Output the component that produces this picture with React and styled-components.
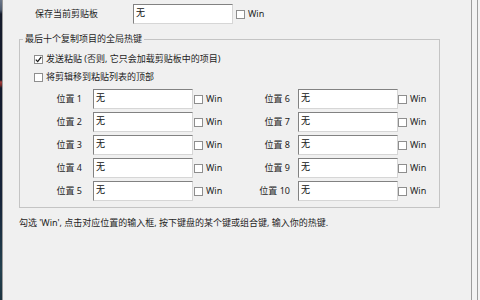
import React from "react";
import styled, { createGlobalStyle } from "styled-components";

const GlobalStyle = createGlobalStyle`
  html, body { margin: 0; padding: 0; background: #f0f0f0; }
  body {
    font-family: "Noto Sans", "Noto Sans CJK SC", sans-serif;
    font-size: 9px;
    color: #1e1e1e;
  }
`;

const Frame = styled.div`
  display: flex;
  width: 480px;
  height: 300px;
  overflow: hidden;
  background: #f0f0f0;
`;

const DesktopStrip = styled.div`
  width: 2px;
  flex: none;
  background: linear-gradient(
    to bottom,
    #6b7688 0,
    #4d5a6e 10px,
    #151b2c 14px,
    #131a2b 80px,
    #a23b3b 82px,
    #7a2a2a 85px,
    #121a2d 88px,
    #16243a 200px,
    #23414f 270px,
    #1c3340 300px
  );
`;

const Rule = styled.div`
  width: 1px;
  flex: none;
  background: ${(p) => p.$color || "#9d9d9d"};
`;

const Gutter = styled.div`
  width: ${(p) => p.$width}px;
  flex: none;
  background: #f3f3f3;
`;

const Panel = styled.div`
  flex: 1;
  min-width: 0;
  display: flex;
  flex-direction: column;
  padding-top: 4px;
  background: #f0f0f0;
`;

const TopRow = styled.div`
  display: flex;
  align-items: center;
  height: 20px;
  padding-left: 32px;
`;

const FieldLabel = styled.span`
  width: 98px;
  flex: none;
  line-height: 12px;
  white-space: nowrap;
`;

const Field = styled.div`
  width: 100px;
  height: 20px;
  flex: none;
  box-sizing: border-box;
  background: #fff;
  border: 1px solid;
  border-color: #828282 #d6d6d6 #d6d6d6 #828282;
  padding: 2px 2px;
  line-height: 12px;
  color: #111;
`;

const WinCheck = styled.label`
  display: flex;
  align-items: center;
  gap: 3px;
  margin-left: ${(p) => p.$offset}px;
  line-height: 12px;
  white-space: nowrap;
`;

const Box = styled.span`
  width: 9px;
  height: 9px;
  flex: none;
  box-sizing: border-box;
  border: 1px solid #8e8e8e;
  background: #fff;
  display: flex;
  align-items: center;
  justify-content: center;
`;

const Group = styled.fieldset`
  margin: 9px 0 0 16px;
  width: 421px;
  box-sizing: border-box;
  min-width: 0;
  border: 1px solid #c4c4c4;
  padding: 5px 0 6px 0;
`;

const Legend = styled.legend`
  margin-left: 3px;
  padding: 0 2px;
  line-height: 12px;
`;

const CheckRow = styled.label`
  display: flex;
  align-items: center;
  gap: 3px;
  height: 18px;
  padding-left: 14px;
  line-height: 12px;
  white-space: nowrap;
`;

const HotkeyGrid = styled.div`
  display: flex;
  margin-top: 3px;
`;

const HotkeyColumn = styled.div`
  display: flex;
  flex-direction: column;
  gap: 3px;
  width: ${(p) => p.$width}px;
  flex: none;
`;

const HotkeyRow = styled.div`
  display: flex;
  align-items: center;
  height: 20px;
`;

const SlotLabel = styled.span`
  width: 62px;
  flex: none;
  text-align: right;
  margin-right: ${(p) => p.$gap}px;
  line-height: 12px;
  white-space: nowrap;
`;

const Footer = styled.p`
  margin: 9px 0 0 16px;
  line-height: 12px;
  white-space: nowrap;
`;

const Tick = () => (
  <svg width="7" height="7" viewBox="0 0 7 7">
    <path d="M0.8 3.6 L2.7 5.6 L6.3 0.9" fill="none" stroke="#1a1a1a" strokeWidth="1.3" />
  </svg>
);

const Check = ({ checked }) => <Box>{checked ? <Tick /> : null}</Box>;

const left = [1, 2, 3, 4, 5];
const right = [6, 7, 8, 9, 10];

const Slot = ({ n, gap, offset }) => (
  <HotkeyRow>
    <SlotLabel $gap={gap}>位置 {n}</SlotLabel>
    <Field>无</Field>
    <WinCheck $offset={offset}>
      <Check />
      Win
    </WinCheck>
  </HotkeyRow>
);

export default function App() {
  return (
    <>
      <GlobalStyle />
      <Frame>
        <DesktopStrip />
        <Rule $color="#9a9a9a" />
        <Panel>
          <TopRow>
            <FieldLabel>保存当前剪贴板</FieldLabel>
            <Field>无</Field>
            <WinCheck $offset={3}>
              <Check />
              Win
            </WinCheck>
          </TopRow>
          <Group>
            <Legend>最后十个复制项目的全局热键</Legend>
            <CheckRow>
              <Check checked />
              发送粘贴 (否则, 它只会加载剪贴板中的项目)
            </CheckRow>
            <CheckRow>
              <Check />
              将剪辑移到粘贴列表的顶部
            </CheckRow>
            <HotkeyGrid>
              <HotkeyColumn $width={208}>
                {left.map((n) => (
                  <Slot key={n} n={n} gap={11} offset={1} />
                ))}
              </HotkeyColumn>
              <HotkeyColumn $width={200}>
                {right.map((n) => (
                  <Slot key={n} n={n} gap={8} offset={0} />
                ))}
              </HotkeyColumn>
            </HotkeyGrid>
          </Group>
          <Footer>勾选 'Win', 点击对应位置的输入框, 按下键盘的某个键或组合键, 输入你的热键.</Footer>
        </Panel>
        <Rule />
        <Gutter $width={5} />
        <Rule />
        <Gutter $width={2} />
      </Frame>
    </>
  );
}
